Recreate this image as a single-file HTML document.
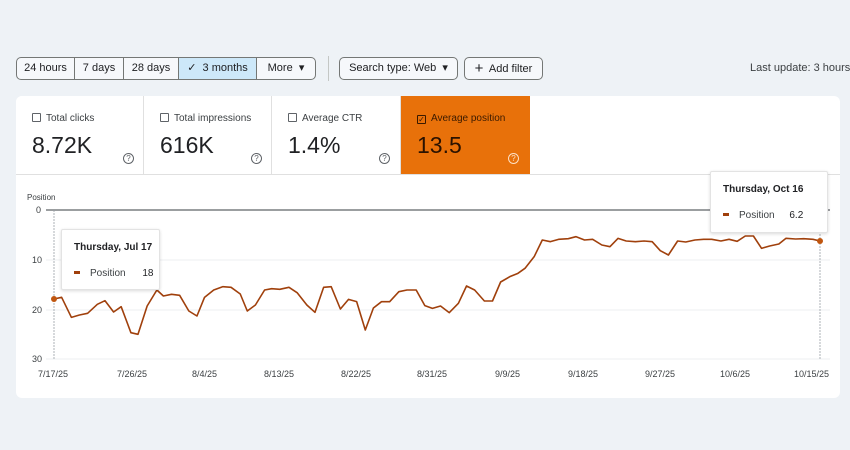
<!DOCTYPE html>
<html><head><style>
*{box-sizing:border-box;margin:0;padding:0}
body{width:850px;height:450px;background:#eef2f6;font-family:"Liberation Sans",sans-serif;position:relative;overflow:hidden;color:#202124}
.abs{position:absolute}
.seg{position:absolute;top:57px;height:23px;border:1px solid #747775;font-size:11px;line-height:21px;text-align:center;color:#202124;background:#f6f8fb}
.btn{position:absolute;top:57px;height:23px;border:1px solid #747775;border-radius:5px;font-size:11px;line-height:21px;text-align:center;background:#f6f8fb}
.card{position:absolute;top:96px;height:78px;background:#fff;border-right:1px solid #e0e0e0}
.lbl{position:absolute;left:16px;top:17px;font-size:10px;color:#3c4043}
.cb{display:inline-block;width:9px;height:9px;border:1px solid #5f6368;margin-right:5px;vertical-align:-1px;border-radius:1px}
.val{position:absolute;left:16px;top:36px;font-size:23px;color:#202124}
.q{position:absolute;top:57px;width:11px;height:11px;border:1px solid #5f6368;border-radius:50%;font-size:8px;line-height:9px;text-align:center;color:#5f6368}
.ax{position:absolute;font-size:9px;color:#3c4043}
.tip{position:absolute;background:#fff;border:1px solid #e3e3e3;box-shadow:0 1px 3px rgba(0,0,0,.15);border-radius:2px}
</style></head><body>
<div class="seg" style="left:16px;width:59px;border-radius:5px 0 0 5px">24 hours</div>
<div class="seg" style="left:74px;width:50px">7 days</div>
<div class="seg" style="left:123px;width:56px">28 days</div>
<div class="seg" style="left:178px;width:79px;background:#cde8f9">✓&nbsp; 3 months</div>
<div class="seg" style="left:256px;width:60px;border-radius:0 5px 5px 0">More &nbsp;▾</div>
<div class="abs" style="left:328px;top:56px;width:1px;height:25px;background:#c4c7c5"></div>
<div class="btn" style="left:339px;width:119px">Search type: Web &nbsp;▾</div>
<div class="btn" style="left:464px;width:79px"><span style="font-size:15px;vertical-align:-1px">+</span>&nbsp; Add filter</div>
<div class="abs" style="left:750px;top:62px;font-size:11px;color:#3c4043;white-space:nowrap">Last update: 3 hours ago</div>

<div class="abs" style="left:16px;top:96px;width:824px;height:302px;background:#fff;border-radius:6px"></div>
<div class="card" style="left:16px;width:128px;border-radius:6px 0 0 0"><div class="lbl"><span class="cb"></span>Total clicks</div><div class="val">8.72K</div><div class="q" style="left:107px">?</div></div>
<div class="card" style="left:144px;width:128px"><div class="lbl"><span class="cb"></span>Total impressions</div><div class="val">616K</div><div class="q" style="left:107px">?</div></div>
<div class="card" style="left:272px;width:129px"><div class="lbl"><span class="cb"></span>Average CTR</div><div class="val">1.4%</div><div class="q" style="left:107px">?</div></div>
<div class="card" style="left:401px;width:129px;background:#e8710a;border:none"><div class="lbl" style="color:#3a1a00"><span class="cb" style="border-color:#3a1a00;font-size:8px;line-height:7px;text-align:center">✓</span>Average position</div><div class="val" style="color:#2a1200">13.5</div><div class="q" style="left:107px;border-color:#fde0c5;color:#fde0c5">?</div></div>
<div class="abs" style="left:16px;top:174px;width:824px;height:1px;background:#e0e0e0"></div>

<div class="ax" style="left:27px;top:193px;font-size:8px">Position</div>
<div class="ax" style="left:36px;top:205px">0</div>
<div class="ax" style="left:32px;top:255px">10</div>
<div class="ax" style="left:32px;top:305px">20</div>
<div class="ax" style="left:32px;top:354px">30</div>
<svg class="abs" style="left:0;top:0" width="850" height="450">
<line x1="46" y1="210" x2="830" y2="210" stroke="#5f6368" stroke-width="1.3"/>
<line x1="46" y1="260" x2="830" y2="260" stroke="#eceff1"/>
<line x1="46" y1="310" x2="830" y2="310" stroke="#eceff1"/>
<line x1="46" y1="359" x2="830" y2="359" stroke="#eceff1"/>
<line x1="54" y1="210" x2="54" y2="359" stroke="#9aa0a6" stroke-width=".8" stroke-dasharray="2 1"/>
<line x1="820" y1="210" x2="820" y2="359" stroke="#9aa0a6" stroke-width=".8" stroke-dasharray="2 1"/>
<g transform="translate(1,180) scale(0.5413,0.33333)">
<polyline fill="none" stroke="#a0400c" stroke-width="1.6" vector-effect="non-scaling-stroke" stroke-linejoin="round" points="98,357 112,352 130,412 145,405 160,400 178,373 192,362 208,396 222,380 240,458 253,463 270,378 288,330 300,348 315,343 330,346 347,393 362,408 376,352 393,330 410,320 425,322 442,342 455,393 470,375 487,330 500,326 515,328 532,322 547,338 565,375 580,397 596,322 610,320 627,387 642,358 657,365 673,450 688,384 703,365 718,365 735,335 750,330 767,330 783,377 797,385 812,378 828,398 845,370 860,318 875,330 893,363 908,363 923,306 940,290 955,280 968,265 985,230 1000,180 1015,185 1030,178 1048,176 1062,170 1078,180 1093,178 1110,195 1125,200 1140,175 1155,183 1172,185 1188,183 1203,185 1218,212 1233,225 1250,183 1265,186 1282,180 1298,178 1313,178 1330,183 1345,178 1360,184 1375,168 1390,168 1405,205 1420,198 1437,192 1450,175 1468,177 1483,176 1500,178 1513,183"/>
</g>
<circle cx="54" cy="299" r="3" fill="#c0560f"/>
<circle cx="820" cy="241" r="3" fill="#c0560f"/>
</svg>
<div class="ax" style="left:38px;top:369px">7/17/25</div>
<div class="ax" style="left:117px;top:369px">7/26/25</div>
<div class="ax" style="left:192px;top:369px">8/4/25</div>
<div class="ax" style="left:264px;top:369px">8/13/25</div>
<div class="ax" style="left:341px;top:369px">8/22/25</div>
<div class="ax" style="left:417px;top:369px">8/31/25</div>
<div class="ax" style="left:495px;top:369px">9/9/25</div>
<div class="ax" style="left:568px;top:369px">9/18/25</div>
<div class="ax" style="left:645px;top:369px">9/27/25</div>
<div class="ax" style="left:720px;top:369px">10/6/25</div>
<div class="ax" style="left:794px;top:369px">10/15/25</div>

<div class="tip" style="left:61px;top:229px;width:99px;height:61px">
<div class="abs" style="left:12px;top:12px;font-size:10px;font-weight:bold;color:#202124">Thursday, Jul 17</div>
<div class="abs" style="left:12px;top:38px;font-size:10px;color:#3c4043"><span style="display:inline-block;width:6px;height:3px;background:#a0400c;vertical-align:2px;margin-right:10px"></span>Position <span style="margin-left:14px;color:#202124">18</span></div>
</div>
<div class="tip" style="left:710px;top:171px;width:118px;height:62px">
<div class="abs" style="left:12px;top:12px;font-size:10px;font-weight:bold;color:#202124">Thursday, Oct 16</div>
<div class="abs" style="left:12px;top:38px;font-size:10px;color:#3c4043"><span style="display:inline-block;width:6px;height:3px;background:#a0400c;vertical-align:2px;margin-right:10px"></span>Position <span style="margin-left:12px;color:#202124">6.2</span></div>
</div>
</body></html>
